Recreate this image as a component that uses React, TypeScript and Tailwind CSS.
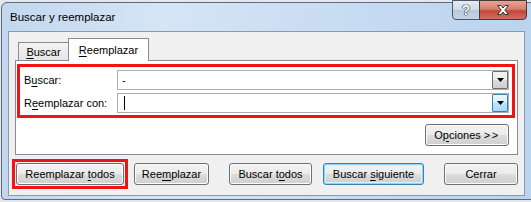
import React from "react";
import clsx from "clsx";

// accelerator letter
const U: React.FC<{ children: React.ReactNode }> = ({ children }) => (
  <span className="underline decoration-[1px] underline-offset-[2px]">{children}</span>
);

const Btn: React.FC<{
  children: React.ReactNode;
  className?: string;
  isDefault?: boolean;
}> = ({ children, className, isDefault }) => (
  <button
    type="button"
    className={clsx(
      "flex h-[22px] items-center justify-center whitespace-nowrap rounded-[3px] border p-0 text-[11px] leading-none text-black",
      "bg-[linear-gradient(#f2f2f2_0%,#ebebeb_50%,#dddddd_50%,#cfcfcf_100%)]",
      isDefault
        ? "border-[#3c7fb1] shadow-[inset_0_0_0_1px_#8fd6f6,inset_0_0_0_2px_#d6f1fc]"
        : "border-[#707070] shadow-[inset_0_0_0_1px_#fcfcfc]",
      className
    )}
  >
    {children}
  </button>
);

const Drop: React.FC<{ active?: boolean }> = ({ active }) => (
  <div
    className={clsx(
      "flex h-[18px] w-[16px] items-center justify-center rounded-[1px] border",
      active
        ? "border-[#3c7fb1] bg-[linear-gradient(#e9f6fd_0%,#d9f0fc_50%,#bee6fd_50%,#a7d9f5_100%)]"
        : "border-[#707070] bg-[linear-gradient(#f2f2f2_0%,#ebebeb_50%,#dddddd_50%,#cfcfcf_100%)]"
    )}
  >
    <svg width="7" height="4" viewBox="0 0 7 4">
      <polygon points="0,0 7,0 3.5,4" fill="#000" />
    </svg>
  </div>
);

export default function App() {
  return (
    <div className="h-[202px] w-[531px] overflow-hidden bg-[#e4e8ee] pl-[1px] pt-[2px] font-['Liberation_Sans',Arial,sans-serif] text-[11px] text-black">
      <div className="flex h-[198px] w-[534px] flex-col rounded-t-[6px] rounded-b-[4px] border border-[#5d6b7d] bg-[linear-gradient(90deg,#c2d7ee_0%,#d5e5f6_30%,#cbdef3_55%,#bad3ee_100%)]">
        {/* title bar */}
        <div className="flex h-[28px] items-start justify-between">
          <div className="self-center whitespace-nowrap pl-[8px] pt-[1px] text-[11.5px] leading-none">
            Buscar y reemplazar
          </div>
          <div className="mr-[7px] -mt-[3px] flex">
            <div className="flex h-[20px] w-[28px] items-center justify-center rounded-bl-[4px] border border-[#4b5667] bg-[linear-gradient(#e4ecf5_0%,#cfdbe9_50%,#b7c8dc_50%,#c6d5e6_100%)]">
              <span className="text-[14px] font-bold leading-none text-white [text-shadow:0_0_1px_#222,0_0_1px_#222,0_0_1px_#222]">
                ?
              </span>
            </div>
            <div className="-ml-[1px] flex h-[20px] w-[48px] items-center justify-center rounded-br-[4px] border border-[#4b3a3a] bg-[linear-gradient(#e8a395_0%,#d7806f_45%,#c4443a_55%,#d0705f_100%)]">
              <svg width="12" height="10" viewBox="0 0 12 10">
                <path
                  d="M0.5 0.5 H4 L6 3 L8 0.5 H11.5 L7.8 5 L11.5 9.5 H8 L6 7 L4 9.5 H0.5 L4.2 5 Z"
                  fill="#fff"
                  stroke="#333"
                  strokeWidth="1"
                  strokeLinejoin="round"
                />
              </svg>
            </div>
          </div>
        </div>

        {/* client area */}
        <div className="ml-[6px] flex h-[165px] w-[517px] flex-col border border-[#8a99ad] bg-[#f0f0f0]">
          {/* tabs */}
          <div className="ml-[9px] mt-[6px] flex items-end">
            <div className="flex h-[18px] w-[51px] items-center justify-center border border-b-0 border-[#898c95] bg-[linear-gradient(#f3f3f3,#e6e6e6)] pt-[1px] leading-none">
              <span>
                <U>B</U>uscar
              </span>
            </div>
            <div className="relative z-10 -mb-[1px] -ml-[1px] flex h-[23px] w-[81px] items-center justify-center border border-b-0 border-[#898c95] bg-white leading-none">
              <span>
                <U>R</U>eemplazar
              </span>
            </div>
          </div>

          {/* pane */}
          <div className="mx-[6px] flex h-[95px] flex-col border border-[#898c95] bg-white">
            <div className="ml-[1px] mr-[2px] mt-[3px] flex flex-col gap-[3px] border-[3px] border-[#f01414] pb-[2px] pl-[4px] pr-[3px] pt-[3px]">
              <div className="flex items-center">
                <div className="w-[93px] whitespace-nowrap leading-none">
                  B<U>u</U>scar:
                </div>
                <div className="flex h-[20px] w-[392px] items-center border border-[#abadb3] bg-white">
                  <div className="flex-1 pl-[4px] leading-none">-</div>
                  <Drop />
                </div>
              </div>
              <div className="flex items-center">
                <div className="w-[93px] whitespace-nowrap leading-none">
                  R<U>e</U>emplazar con:
                </div>
                <div className="flex h-[20px] w-[392px] items-center border border-[#abadb3] bg-white">
                  <div className="flex flex-1 items-center pl-[6px]">
                    <span className="h-[14px] w-[1px] bg-black" />
                  </div>
                  <Drop active />
                </div>
              </div>
            </div>
            <div className="mr-[8px] mt-[6px] flex justify-end">
              <Btn className="w-[84px]">
                <span>
                  O<U>p</U>ciones <span className="tracking-[1.5px]">&gt;&gt;</span>
                </span>
              </Btn>
            </div>
          </div>

          {/* bottom buttons */}
          <div className="ml-[3px] mt-[4px] flex items-center">
            <div className="border-[3px] border-[#f01414] p-[1px]">
              <Btn className="w-[108px]">
                <span>
                  Reemplazar <U>t</U>odos
                </span>
              </Btn>
            </div>
            <Btn className="ml-[6px] w-[75px]">
              <span>
                Ree<U>m</U>plazar
              </span>
            </Btn>
            <Btn className="ml-[20px] w-[83px]">
              <span>
                Buscar t<U>o</U>dos
              </span>
            </Btn>
            <Btn className="ml-[11px] w-[101px]" isDefault>
              <span>
                Buscar <U>s</U>iguiente
              </span>
            </Btn>
            <Btn className="ml-[20px] w-[74px]">Cerrar</Btn>
          </div>
        </div>
      </div>
    </div>
  );
}
